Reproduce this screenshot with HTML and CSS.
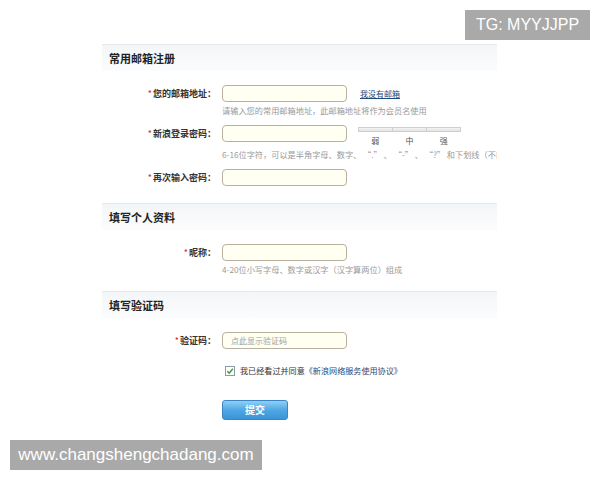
FILE: index.html
```html
<!DOCTYPE html>
<html>
<head>
    <meta charset="UTF-8">
    <title>新浪会员注册</title>
    <link rel="stylesheet" href="styles.css">
</head>
<body>
    <div class="tg-mark">TG: MYYJJPP</div>

    <div class="reg-box">
        <div class="section-title">常用邮箱注册</div>

        <div class="form-row first">
            <label class="field-label"><span class="star">*</span>您的邮箱地址：</label>
            <div class="field">
                <input class="text-input" type="text">
                <a class="side-link" href="#">我没有邮箱</a>
            </div>
            <div class="hint">请输入您的常用邮箱地址，此邮箱地址将作为会员名使用</div>
        </div>

        <div class="form-row">
            <label class="field-label"><span class="star">*</span>新浪登录密码：</label>
            <div class="field">
                <input class="text-input" type="password">
                <div class="strength">
                    <div class="strength-bar"><span></span><span></span><span></span></div>
                    <div class="strength-text"><span>弱</span><span>中</span><span>强</span></div>
                </div>
            </div>
            <div class="hint">6-16位字符，可以是半角字母、数字、 “.” 、 “-” 、 “?” 和下划线（不能以空格开头）</div>
        </div>

        <div class="form-row">
            <label class="field-label"><span class="star">*</span>再次输入密码：</label>
            <div class="field">
                <input class="text-input" type="password">
            </div>
        </div>

        <div class="section-title second">填写个人资料</div>

        <div class="form-row first">
            <label class="field-label"><span class="star">*</span>昵称：</label>
            <div class="field">
                <input class="text-input" type="text">
            </div>
            <div class="hint">4-20位小写字母、数字或汉字（汉字算两位）组成</div>
        </div>

        <div class="section-title third">填写验证码</div>

        <div class="form-row first">
            <label class="field-label"><span class="star">*</span>验证码：</label>
            <div class="field">
                <input class="text-input" type="text" placeholder="点此显示验证码">
            </div>
        </div>

        <div class="agree-row">
            <svg class="check" width="10" height="10" viewBox="0 0 10 10">
                <rect x="0.5" y="0.5" width="9" height="9" fill="#fff" stroke="#8c9aa8"/>
                <path d="M2.3 5.2 L4.2 7.1 L7.8 2.8" fill="none" stroke="#3a9a2a" stroke-width="1.4"/>
            </svg>
            <span>我已经看过并同意<a class="agree-link" href="#">《新浪网络服务使用协议》</a></span>
        </div>

        <div class="submit-row">
            <button class="submit-btn">提交</button>
        </div>
    </div>

    <div class="site-mark">www.changshengchadang.com</div>
</body>
</html>
```

FILE: styles.css
```css
body {
    margin: 0;
    background-color: #fff;
    font-family: "Noto Sans CJK SC", "DejaVu Sans", sans-serif;
    color: #333;
}
.tg-mark {
    position: absolute;
    top: 10px;
    left: 465px;
    width: 125px;
    height: 30px;
    line-height: 30px;
    text-align: center;
    background-color: #a9a9a9;
    color: #fff;
    font-family: "Liberation Sans", Arial, sans-serif;
    font-size: 16px;
}
.site-mark {
    position: absolute;
    top: 440px;
    left: 10px;
    width: 252px;
    height: 30px;
    line-height: 30px;
    text-align: center;
    background-color: #a9a9a9;
    color: #fff;
    font-family: "Liberation Sans", Arial, sans-serif;
    font-size: 17px;
}
.reg-box {
    width: 395px;
    margin: 44px 0 0 102px;
    overflow: hidden;
}
.section-title {
    height: 26px;
    line-height: 26px;
    padding-left: 7px;
    border-top: 1px solid #e6e8ea;
    background: linear-gradient(to bottom, #f3f6f8, #fbfcfd);
    font-size: 11px;
    font-weight: bold;
    color: #222;
}
.section-title.second {
    margin-top: 17px;
}
.section-title.third {
    margin-top: 16px;
}
.form-row {
    display: grid;
    grid-template-columns: 114px 1fr;
    column-gap: 6px;
    margin-top: 9px;
}
.form-row.first {
    margin-top: 14px;
}
.field-label {
    text-align: right;
    font-size: 9px;
    font-weight: bold;
    line-height: 17px;
    color: #333;
    white-space: nowrap;
}
.star {
    color: #d2261c;
    font-weight: normal;
    margin-right: 1px;
}
.field {
    display: flex;
    align-items: flex-start;
}
.text-input {
    box-sizing: border-box;
    width: 125px;
    height: 17px;
    margin: 0;
    padding: 0 8px;
    border: 1px solid #b9b09e;
    border-radius: 4px;
    background-color: #fffff2;
    font-size: 8px;
    font-family: "Noto Sans CJK SC", sans-serif;
    color: #999;
}
.text-input::placeholder {
    color: #a0a0a0;
}
.side-link {
    margin: 0 0 0 13px;
    line-height: 17px;
    font-size: 8px;
    color: #1f4a7a;
    text-decoration: underline;
}
.strength {
    margin-left: 11px;
    width: 103px;
}
.strength-bar {
    display: flex;
    margin-top: 2px;
}
.strength-bar span {
    flex: 1;
    height: 3px;
    border: 1px solid #cfcfcf;
    border-left: none;
    background: linear-gradient(to bottom, #f4f4f4, #e2e2e2);
}
.strength-bar span:first-child {
    border-left: 1px solid #cfcfcf;
}
.strength-text {
    display: flex;
    font-size: 8px;
    line-height: 10px;
    margin-top: 4px;
    color: #555;
}
.strength-text span {
    flex: 1;
    text-align: center;
}
.hint {
    grid-column: 2;
    margin-top: 2px;
    font-size: 8.2px;
    line-height: 12px;
    color: #9a9a9a;
    white-space: nowrap;
}
.agree-row {
    display: flex;
    align-items: center;
    margin: 16px 0 0 123px;
    font-size: 8.1px;
    color: #333;
}
.check {
    margin-right: 5px;
}
.agree-link {
    color: #1f4a7a;
    text-decoration: none;
}
.submit-row {
    margin: 19px 0 0 120px;
}
.submit-btn {
    width: 66px;
    height: 20px;
    padding: 0;
    border: 1px solid #3a86c4;
    border-radius: 3px;
    background: linear-gradient(to bottom, #8fd0f6, #4fa8e4 50%, #3c93d6);
    color: #fff;
    font-size: 10px;
    font-weight: bold;
    font-family: "Noto Sans CJK SC", sans-serif;
    cursor: pointer;
}
```
